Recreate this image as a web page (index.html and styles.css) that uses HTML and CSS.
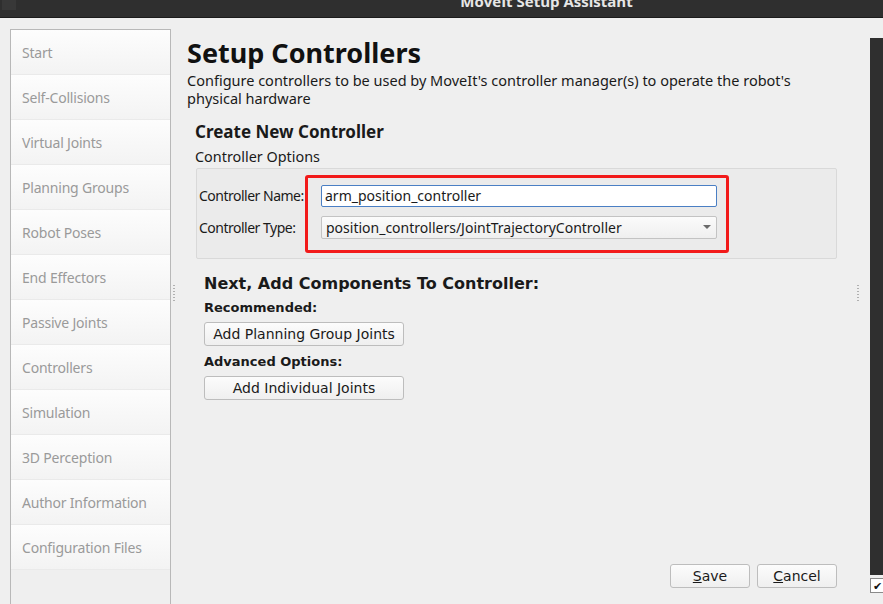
FILE: index.html
```html
<html>
  <meta charset="utf-8" />
  <title>MoveIt Setup Assistant</title>
  <head>
    <link rel="stylesheet" href="styles.css">
  </head>
  <body>
    <div class="titlebar">
      <div class="winbtn"></div>
      <div class="wintitle">MoveIt Setup Assistant</div>
    </div>

    <div class="window">
      <!-- 1. 左側導覽 -->
      <ul class="sidebar">
        <li>Start</li>
        <li>Self-Collisions</li>
        <li>Virtual Joints</li>
        <li>Planning Groups</li>
        <li>Robot Poses</li>
        <li>End Effectors</li>
        <li>Passive Joints</li>
        <li>Controllers</li>
        <li>Simulation</li>
        <li>3D Perception</li>
        <li>Author Information</li>
        <li>Configuration Files</li>
      </ul>

      <div class="splitter left"><span class="dots"></span></div>

      <!-- 2. 主要內容 -->
      <main class="content">
        <h1>Setup Controllers</h1>
        <p class="desc">Configure controllers to be used by MoveIt's controller manager(s) to operate the robot's physical hardware</p>

        <div class="create">
          <h2>Create New Controller</h2>
          <div class="grouptitle">Controller Options</div>
          <div class="groupbox">
            <div class="formrows">
              <div class="row">
                <label>Controller Name:</label>
                <div class="input">arm_position_controller</div>
              </div>
              <div class="row">
                <label>Controller Type:</label>
                <div class="combo">
                  <span>position_controllers/JointTrajectoryController</span>
                  <svg width="8" height="5" viewBox="0 0 8 5"><path d="M0 0 L8 0 L4 4 Z" fill="#6a6a6a" /></svg>
                </div>
              </div>
              <div class="highlight"></div>
            </div>
          </div>

          <div class="components">
            <h3>Next, Add Components To Controller:</h3>
            <div class="sublabel">Recommended:</div>
            <button class="btn wide">Add Planning Group Joints</button>
            <div class="sublabel">Advanced Options:</div>
            <button class="btn wide">Add Individual Joints</button>
          </div>
        </div>

        <div class="bottombar">
          <button class="btn small"><u>S</u>ave</button>
          <button class="btn small"><u>C</u>ancel</button>
        </div>
      </main>

      <div class="splitter right"><span class="dots"></span></div>

      <div class="edge">
        <div class="darkstrip"></div>
        <div class="checkbox">&#10004;</div>
      </div>
    </div>
  </body>
</html>
```

FILE: styles.css
```css
/* 0. 基本設定 */
body {
  margin: 0;
  padding: 0;
  background-color: #efefef;
  font-family: "Noto Sans", "DejaVu Sans", sans-serif;
  font-size: 14px;
  color: #1a1a1a;
  overflow: hidden;
}

/* 1. 視窗標題列 (標題文字被上緣切掉一半) */
.titlebar {
  height: 17px;
  background-color: #2f2f2f;
  border-bottom: 1px solid #1c1c1c;
  overflow: hidden;
  position: relative;
  display: flex;
  justify-content: center;
}
.winbtn {
  position: absolute;
  left: 2px;
  top: 0;
  width: 14px;
  height: 10px;
  background-color: #383838;
}
.wintitle {
  margin: -9px 0 0 210px;
  font-family: "Open Sans", "Noto Sans", sans-serif;
  font-weight: bold;
  font-size: 15px;
  line-height: 20px;
  color: #e6e6e6;
}

/* 2. 主視窗 */
.window {
  display: flex;
  height: 586px;
}

.sidebar {
  margin: 11px 0 0 10px;
  padding: 0;
  width: 159px;
  border: 1px solid #b8b8b8;
  border-bottom: none;
  list-style: none;
}
.sidebar li {
  height: 44px;
  line-height: 46px;
  padding-left: 11px;
  color: #9a9a9a;
  font-size: 14px;
  letter-spacing: -0.2px;
  background: linear-gradient(to bottom, #fdfdfd, #f3f3f3);
  border-bottom: 1px solid #eaeaea;
}

.splitter {
  display: flex;
  align-items: center;
}
.splitter.left {
  width: 16px;
  padding-left: 2px;
  box-sizing: border-box;
}
.splitter.right {
  width: 20px;
  padding-left: 7px;
  box-sizing: border-box;
}
.dots {
  width: 2px;
  height: 16px;
  margin-top: -36px;
  background: repeating-linear-gradient(to bottom, #b0b0b0 0 1px, transparent 1px 3px);
}

/* 3. 內容 */
.content {
  flex: 1;
  display: flex;
  flex-direction: column;
  padding-top: 20px;
}
h1 {
  margin: 0;
  font-size: 27px;
  line-height: 30px;
  font-weight: bold;
  color: #111;
}
.desc {
  margin: 3px 0 0 0;
  font-size: 14.5px;
  line-height: 18px;
  width: 640px;
}
.create {
  padding-left: 8px;
}
h2 {
  margin: 14px 0 0 0;
  font-size: 17px;
  line-height: 22px;
  font-weight: bold;
}
.grouptitle {
  margin-top: 5px;
  font-size: 14.4px;
  line-height: 18px;
}
.groupbox {
  margin: 2px 13px 0 1px;
  height: 89px;
  background-color: #ebebeb;
  border: 1px solid #d9d9d9;
  border-radius: 2px;
}
.formrows {
  position: relative;
  width: 524px;
  padding: 15px 0 0 2px;
}
.row {
  display: flex;
  align-items: center;
  height: 23px;
  margin-bottom: 9px;
}
.row label {
  width: 122px;
  font-size: 14px;
  letter-spacing: -0.5px;
  white-space: nowrap;
}
.input {
  width: 391px;
  height: 20px;
  line-height: 20px;
  padding-left: 3px;
  background-color: #fff;
  border: 1px solid #4a7fc4;
  border-radius: 2px;
  font-size: 14px;
}
.combo {
  width: 385px;
  height: 21px;
  padding: 0 5px 0 4px;
  display: flex;
  justify-content: space-between;
  align-items: center;
  background: linear-gradient(to bottom, #fbfbfb, #efefef);
  border: 1px solid #c3c3c3;
  border-radius: 2px;
  font-size: 14px;
}
/* 紅框 */
.highlight {
  position: absolute;
  left: 108px;
  top: 6px;
  width: 418px;
  height: 72px;
  border: 3px solid #f21a1a;
  border-radius: 3px;
}

.components {
  padding: 15px 0 0 9px;
  font-family: "DejaVu Sans", sans-serif;
}
h3 {
  margin: 0 0 5px 0;
  font-size: 16px;
  line-height: 20px;
  font-weight: bold;
}
.sublabel {
  font-size: 13px;
  font-weight: bold;
  line-height: 17px;
}
.btn {
  display: block;
  font-family: "DejaVu Sans", sans-serif;
  font-size: 14px;
  color: #1a1a1a;
  background: linear-gradient(to bottom, #fcfcfc, #efefef);
  border: 1px solid #bdbdbd;
  border-radius: 3px;
  padding: 0;
}
.btn.wide {
  width: 200px;
  height: 24px;
  margin: 6px 0 7px 0;
}
.btn.small {
  width: 80px;
  height: 24px;
}
.btn u {
  text-decoration-thickness: 1px;
}
.bottombar {
  margin-top: auto;
  margin-bottom: 16px;
  display: flex;
  justify-content: flex-end;
  gap: 7px;
  padding-right: 13px;
}

/* 4. 右側邊緣 */
.edge {
  width: 13px;
  display: flex;
  flex-direction: column;
}
.darkstrip {
  margin-top: 20px;
  height: 537px;
  background-color: #2f2f2f;
}
.checkbox {
  margin-top: 3px;
  width: 13px;
  height: 13px;
  background-color: #fff;
  border: 1px solid #8a8a8a;
  font-size: 11px;
  line-height: 13px;
  text-align: center;
  color: #111;
}
```
